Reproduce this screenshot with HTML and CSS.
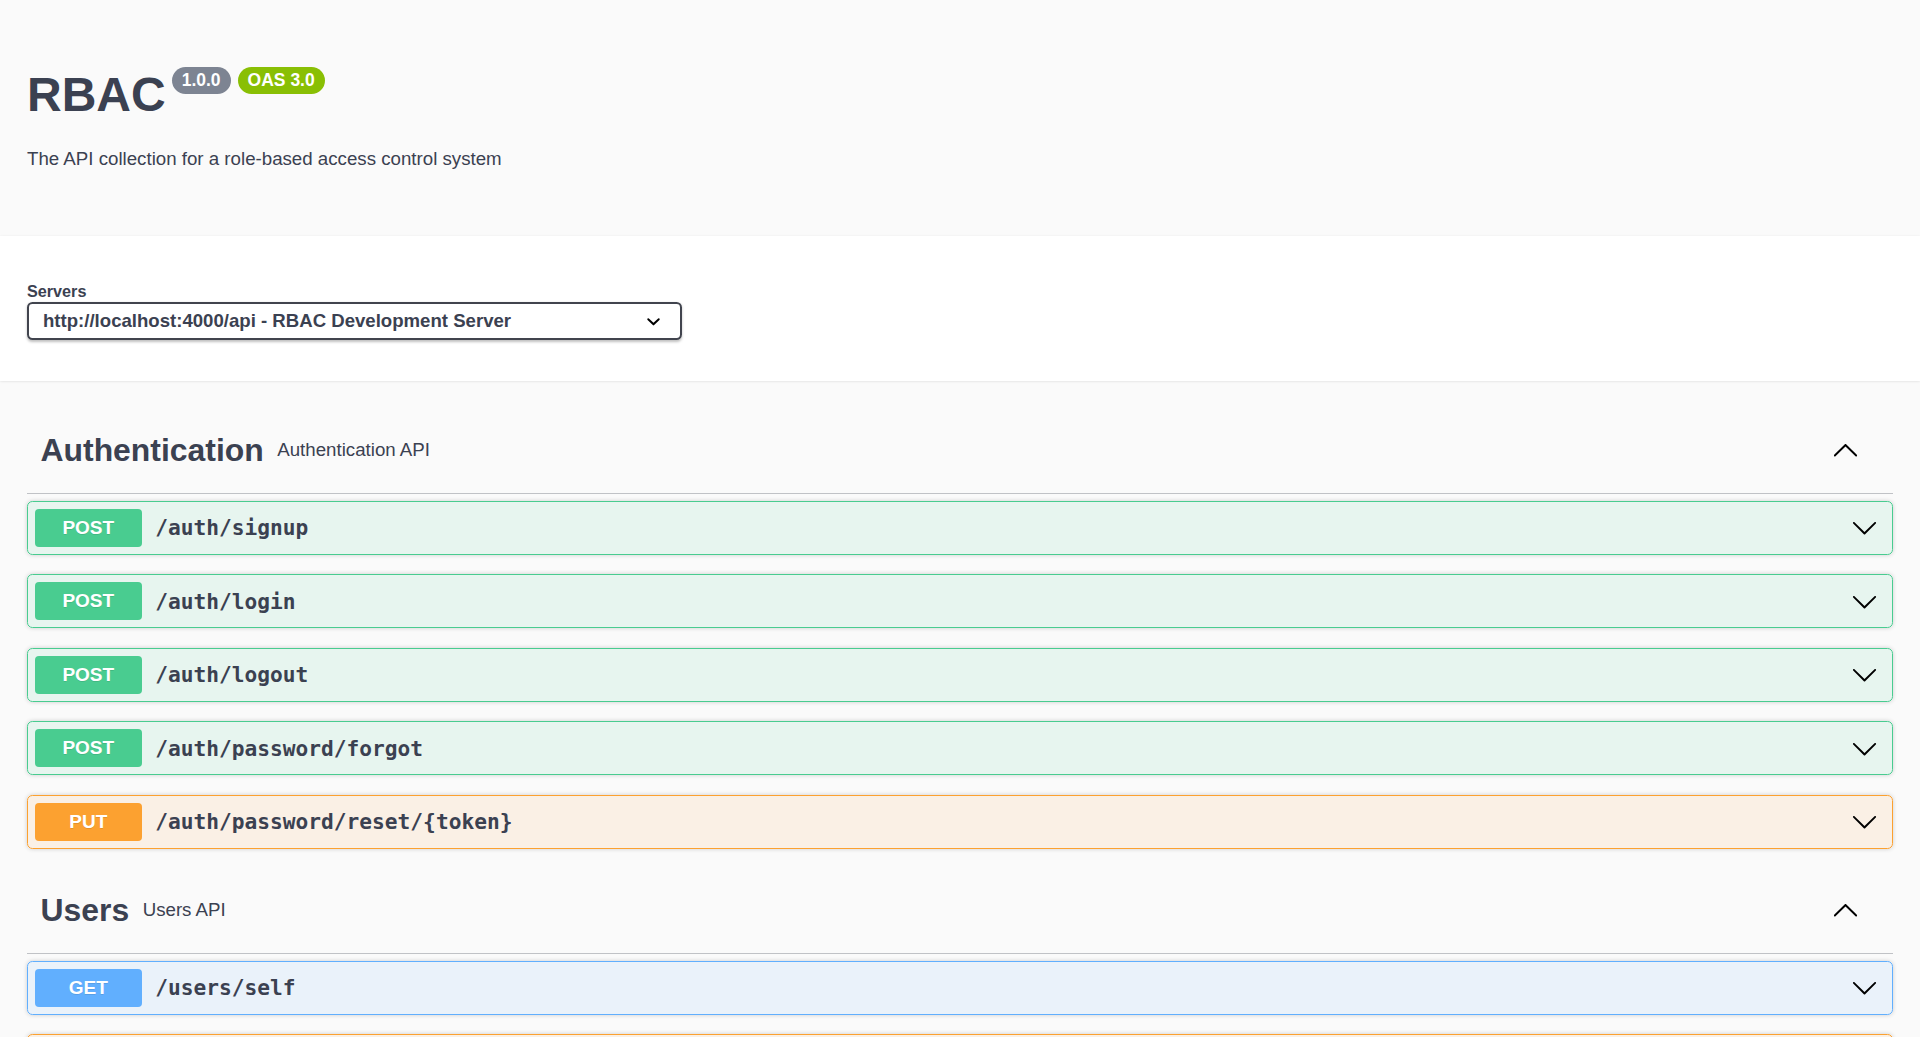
FILE: index.html
```html
<!DOCTYPE html>
<html>
<head>
  <link rel="stylesheet" href="styles.css">
</head>
<body>
  <div class="swagger">
    <section class="info wrapper">
      <h2 class="title">
        <span class="title-text">RBAC</span>
        <span class="badge version">1.0.0</span>
        <span class="badge oas">OAS 3.0</span>
      </h2>
      <p class="description">The API collection for a role-based access control system</p>
    </section>

    <section class="scheme">
      <div class="wrapper">
        <label class="servers-title">Servers</label>
        <div class="select">
          <span>http://localhost:4000/api - RBAC Development Server</span>
          <svg class="select-arrow" width="27" height="27" viewBox="0 0 20 20"><path d="M13.418 7.859a.695.695 0 01.978 0 .68.68 0 010 .969l-3.908 3.83a.697.697 0 01-.979 0l-3.908-3.83a.68.68 0 010-.969.695.695 0 01.978 0L10 11l3.418-3.141z"/></svg>
        </div>
      </div>
    </section>

    <section class="operations wrapper">
      <div class="tag-section">
        <h3 class="tag">
          <span class="tag-name">Authentication</span>
          <small>Authentication API</small>
          <span class="tag-arrow">
            <svg width="27" height="27" viewBox="0 0 20 20"><path d="M17.418 14.908c.272.268.709.268.979 0s.271-.701 0-.969l-7.908-7.83c-.27-.268-.707-.268-.979 0l-7.908 7.83c-.27.268-.27.701 0 .969.271.268.709.268.979 0L10 7.75l7.418 7.158z"/></svg>
          </span>
        </h3>

        <div class="opblock post">
          <span class="method">POST</span>
          <span class="path">/auth/signup</span>
          <svg class="arrow" width="27" height="27" viewBox="0 0 20 20"><path d="M17.418 6.109c.272-.268.709-.268.979 0s.271.701 0 .969l-7.908 7.83c-.27.268-.707.268-.979 0l-7.908-7.83c-.27-.268-.27-.701 0-.969.271-.268.709-.268.979 0L10 13.25l7.418-7.141z"/></svg>
        </div>
        <div class="opblock post">
          <span class="method">POST</span>
          <span class="path">/auth/login</span>
          <svg class="arrow" width="27" height="27" viewBox="0 0 20 20"><path d="M17.418 6.109c.272-.268.709-.268.979 0s.271.701 0 .969l-7.908 7.83c-.27.268-.707.268-.979 0l-7.908-7.83c-.27-.268-.27-.701 0-.969.271-.268.709-.268.979 0L10 13.25l7.418-7.141z"/></svg>
        </div>
        <div class="opblock post">
          <span class="method">POST</span>
          <span class="path">/auth/logout</span>
          <svg class="arrow" width="27" height="27" viewBox="0 0 20 20"><path d="M17.418 6.109c.272-.268.709-.268.979 0s.271.701 0 .969l-7.908 7.83c-.27.268-.707.268-.979 0l-7.908-7.83c-.27-.268-.27-.701 0-.969.271-.268.709-.268.979 0L10 13.25l7.418-7.141z"/></svg>
        </div>
        <div class="opblock post">
          <span class="method">POST</span>
          <span class="path">/auth/password/forgot</span>
          <svg class="arrow" width="27" height="27" viewBox="0 0 20 20"><path d="M17.418 6.109c.272-.268.709-.268.979 0s.271.701 0 .969l-7.908 7.83c-.27.268-.707.268-.979 0l-7.908-7.83c-.27-.268-.27-.701 0-.969.271-.268.709-.268.979 0L10 13.25l7.418-7.141z"/></svg>
        </div>
        <div class="opblock put">
          <span class="method">PUT</span>
          <span class="path">/auth/password/reset/{token}</span>
          <svg class="arrow" width="27" height="27" viewBox="0 0 20 20"><path d="M17.418 6.109c.272-.268.709-.268.979 0s.271.701 0 .969l-7.908 7.83c-.27.268-.707.268-.979 0l-7.908-7.83c-.27-.268-.27-.701 0-.969.271-.268.709-.268.979 0L10 13.25l7.418-7.141z"/></svg>
        </div>
      </div>

      <div class="tag-section">
        <h3 class="tag">
          <span class="tag-name">Users</span>
          <small>Users API</small>
          <span class="tag-arrow">
            <svg width="27" height="27" viewBox="0 0 20 20"><path d="M17.418 14.908c.272.268.709.268.979 0s.271-.701 0-.969l-7.908-7.83c-.27-.268-.707-.268-.979 0l-7.908 7.83c-.27.268-.27.701 0 .969.271.268.709.268.979 0L10 7.75l7.418 7.158z"/></svg>
          </span>
        </h3>

        <div class="opblock get">
          <span class="method">GET</span>
          <span class="path">/users/self</span>
          <svg class="arrow" width="27" height="27" viewBox="0 0 20 20"><path d="M17.418 6.109c.272-.268.709-.268.979 0s.271.701 0 .969l-7.908 7.83c-.27.268-.707.268-.979 0l-7.908-7.83c-.27-.268-.27-.701 0-.969.271-.268.709-.268.979 0L10 13.25l7.418-7.141z"/></svg>
        </div>
        <div class="opblock put">
          <span class="method">PUT</span>
          <span class="path">/users/self</span>
          <svg class="arrow" width="27" height="27" viewBox="0 0 20 20"><path d="M17.418 6.109c.272-.268.709-.268.979 0s.271.701 0 .969l-7.908 7.83c-.27.268-.707.268-.979 0l-7.908-7.83c-.27-.268-.27-.701 0-.969.271-.268.709-.268.979 0L10 13.25l7.418-7.141z"/></svg>
        </div>
      </div>
    </section>
  </div>
</body>
</html>
```

FILE: styles.css
```css
body {
  margin: 0;
  background-color: #fafafa;
  color: #3b4151;
  font-family: "Liberation Sans", Arial, sans-serif;
}

.wrapper {
  padding: 0 27px;
}

/* info header */
.info {
  padding-top: 67px;
  padding-bottom: 66px;
}

.title {
  display: flex;
  align-items: flex-start;
  margin: 0;
  font-size: 48px;
  line-height: 56px;
  font-weight: bold;
  color: #3b4151;
}

.badge {
  display: inline-block;
  margin-left: 7px;
  padding: 3px 10px;
  border-radius: 57px;
  font-size: 17.5px;
  line-height: 21px;
  font-weight: bold;
  color: #fff;
}

.badge.version {
  margin-left: 6px;
  background-color: #7d8492;
}

.badge.oas {
  background-color: #89bf04;
}

.description {
  margin: 25px 0 0;
  font-size: 18.7px;
  line-height: 22px;
}

/* servers */
.scheme {
  background-color: #fff;
  box-shadow: 0 1.35px 2.7px 0 rgba(0, 0, 0, 0.15);
  padding: 45px 0 41px;
}

.servers-title {
  display: block;
  font-size: 16.2px;
  line-height: 20px;
  font-weight: bold;
  margin-bottom: 1px;
}

.select {
  display: flex;
  align-items: center;
  justify-content: space-between;
  box-sizing: border-box;
  width: 655px;
  height: 38px;
  padding: 0 13.5px 0 14px;
  border: 2px solid #41444e;
  border-radius: 5.4px;
  box-shadow: 0 1.35px 2.7px 0 rgba(0, 0, 0, 0.25);
  font-size: 18.6px;
  font-weight: bold;
  color: #3b4151;
}

.select-arrow {
  flex-shrink: 0;
}

/* operations */
.operations {
  padding-top: 27px;
}

.tag {
  display: flex;
  align-items: center;
  box-sizing: border-box;
  height: 85.5px;
  margin: 0 0 7px;
  padding: 0 27px 0 13.5px;
  border-bottom: 1px solid rgba(59, 65, 81, 0.3);
  font-weight: normal;
}

.tag-name {
  font-size: 31.9px;
  font-weight: bold;
}

.tag small {
  flex: 1;
  padding: 0 13.5px;
  font-size: 18.7px;
}

.tag-arrow {
  display: flex;
  margin-right: 7px;
  margin-top: -2px;
}

.opblock {
  display: flex;
  align-items: center;
  box-sizing: border-box;
  height: 54px;
  margin-bottom: 19.5px;
  padding: 0 14.5px 0 6.75px;
  border: 1px solid;
  border-radius: 5.4px;
  box-shadow: 0 0 4px rgba(0, 0, 0, 0.19);
}

.method {
  min-width: 107px;
  padding: 8px 0;
  border-radius: 4px;
  font-size: 19px;
  line-height: 22px;
  font-weight: bold;
  text-align: center;
  color: #fff;
  text-shadow: 0 1px 0 rgba(0, 0, 0, 0.1);
}

.path {
  flex: 1;
  padding: 0 13.5px;
  font-family: "DejaVu Sans Mono", monospace;
  font-size: 21.2px;
  font-weight: bold;
  color: #3b4151;
}

.arrow {
  flex-shrink: 0;
}

.opblock.post {
  background-color: rgba(73, 204, 144, 0.1);
  border-color: #49cc90;
}

.opblock.post .method {
  background-color: #49cc90;
}

.opblock.put {
  background-color: rgba(252, 161, 48, 0.1);
  border-color: #fca130;
}

.opblock.put .method {
  background-color: #fca130;
}

.opblock.get {
  background-color: rgba(97, 175, 254, 0.1);
  border-color: #61affe;
}

.opblock.get .method {
  background-color: #61affe;
}
```
